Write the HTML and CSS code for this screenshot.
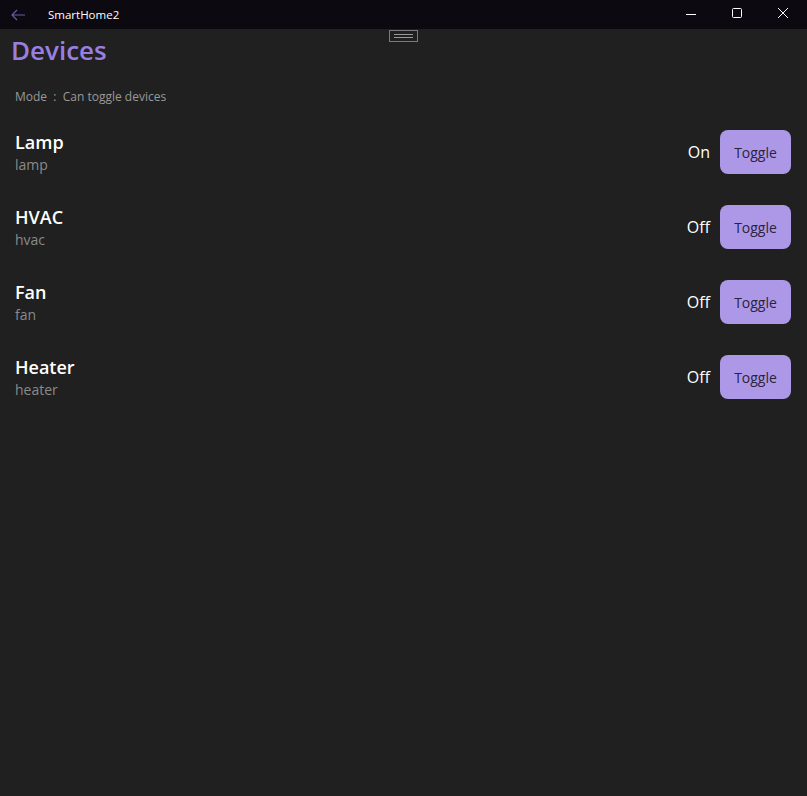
FILE: index.html
```html
<!DOCTYPE html>
<html>
<head>
<meta charset="utf-8">
<link rel="stylesheet" href="styles.css">
</head>
<body>
<div class="window">
  <header class="titlebar">
    <svg class="back" width="16" height="12" viewBox="0 0 16 12"><path d="M15 6H2M7 1L2 6l5 5" fill="none" stroke="#6a5aa8" stroke-width="1.2"/></svg>
    <span class="apptitle">SmartHome2</span>
    <div class="controls">
      <svg width="46" height="29" viewBox="0 0 46 29"><path d="M18 14.5h10" stroke="#fff" stroke-width="1"/></svg>
      <svg width="46" height="29" viewBox="0 0 46 29"><rect x="18.5" y="8.5" width="9" height="9" rx="1" fill="none" stroke="#fff" stroke-width="1"/></svg>
      <svg width="46" height="29" viewBox="0 0 46 29"><path d="M18 8l10 10M28 8L18 18" stroke="#fff" stroke-width="1"/></svg>
    </div>
  </header>
  <main class="content">
    <div class="handle"><span></span><span></span></div>
    <h1 class="title">Devices</h1>
    <p class="mode">Mode&nbsp; : &nbsp;Can toggle devices</p>
    <ul class="devices">
      <li class="device">
        <div class="info"><div class="name">Lamp</div><div class="id">lamp</div></div>
        <div class="actions"><span class="state">On</span><button class="toggle">Toggle</button></div>
      </li>
      <li class="device">
        <div class="info"><div class="name">HVAC</div><div class="id">hvac</div></div>
        <div class="actions"><span class="state">Off</span><button class="toggle">Toggle</button></div>
      </li>
      <li class="device">
        <div class="info"><div class="name">Fan</div><div class="id">fan</div></div>
        <div class="actions"><span class="state">Off</span><button class="toggle">Toggle</button></div>
      </li>
      <li class="device">
        <div class="info"><div class="name">Heater</div><div class="id">heater</div></div>
        <div class="actions"><span class="state">Off</span><button class="toggle">Toggle</button></div>
      </li>
    </ul>
  </main>
</div>
</body>
</html>
```
FILE: styles.css
```css
* { box-sizing: border-box; }
html, body { margin: 0; padding: 0; height: 100%; }
body {
  background: #202020;
  font-family: "Open Sans", "Noto Sans", sans-serif;
  color: #fff;
}
.window { height: 796px; display: flex; flex-direction: column; }
.titlebar {
  height: 29px;
  background: #0c0910;
  display: flex;
  align-items: center;
  flex: none;
}
.back { margin-left: 10px; }
.apptitle {
  margin-left: 22px;
  font-size: 11.5px;
  color: #fff;
}
.controls { margin-left: auto; display: flex; margin-right: 1px; }
.controls svg { display: block; }
.content {
  flex: 1;
  position: relative;
  padding: 0 16px 0 11px;
}
.handle {
  position: absolute;
  left: 389px;
  top: 1px;
  width: 29px;
  height: 12px;
  border: 1px solid #7a7a7a;
  display: flex;
  flex-direction: column;
  justify-content: center;
  align-items: center;
  gap: 2px;
}
.handle span { display: block; width: 19px; height: 1px; background: #9a9a9a; }
.title {
  margin: 4px 0 0;
  font-size: 26px;
  font-weight: 600;
  line-height: 34px;
  color: #9a7fe2;
}
.mode {
  margin: 22px 0 0 4px;
  font-size: 12px;
  line-height: 16px;
  color: #999999;
}
.devices { list-style: none; margin: 14px 0 0 4px; padding: 0; }
.device {
  display: flex;
  justify-content: space-between;
  align-items: center;
  height: 75px;
  padding-bottom: 9px;
}
.name { font-size: 18px; font-weight: 600; line-height: 22px; }
.id { font-size: 14px; line-height: 19px; color: #8a8a8a; margin-top: 2px; }
.actions { display: flex; align-items: center; gap: 10px; }
.state { font-size: 16px; color: #fff; }
.toggle {
  width: 71px;
  height: 44px;
  border: none;
  border-radius: 8px;
  background: #ad98e8;
  color: #2a2340;
  font-family: inherit;
  font-size: 14px;
  padding: 0;
}
```
